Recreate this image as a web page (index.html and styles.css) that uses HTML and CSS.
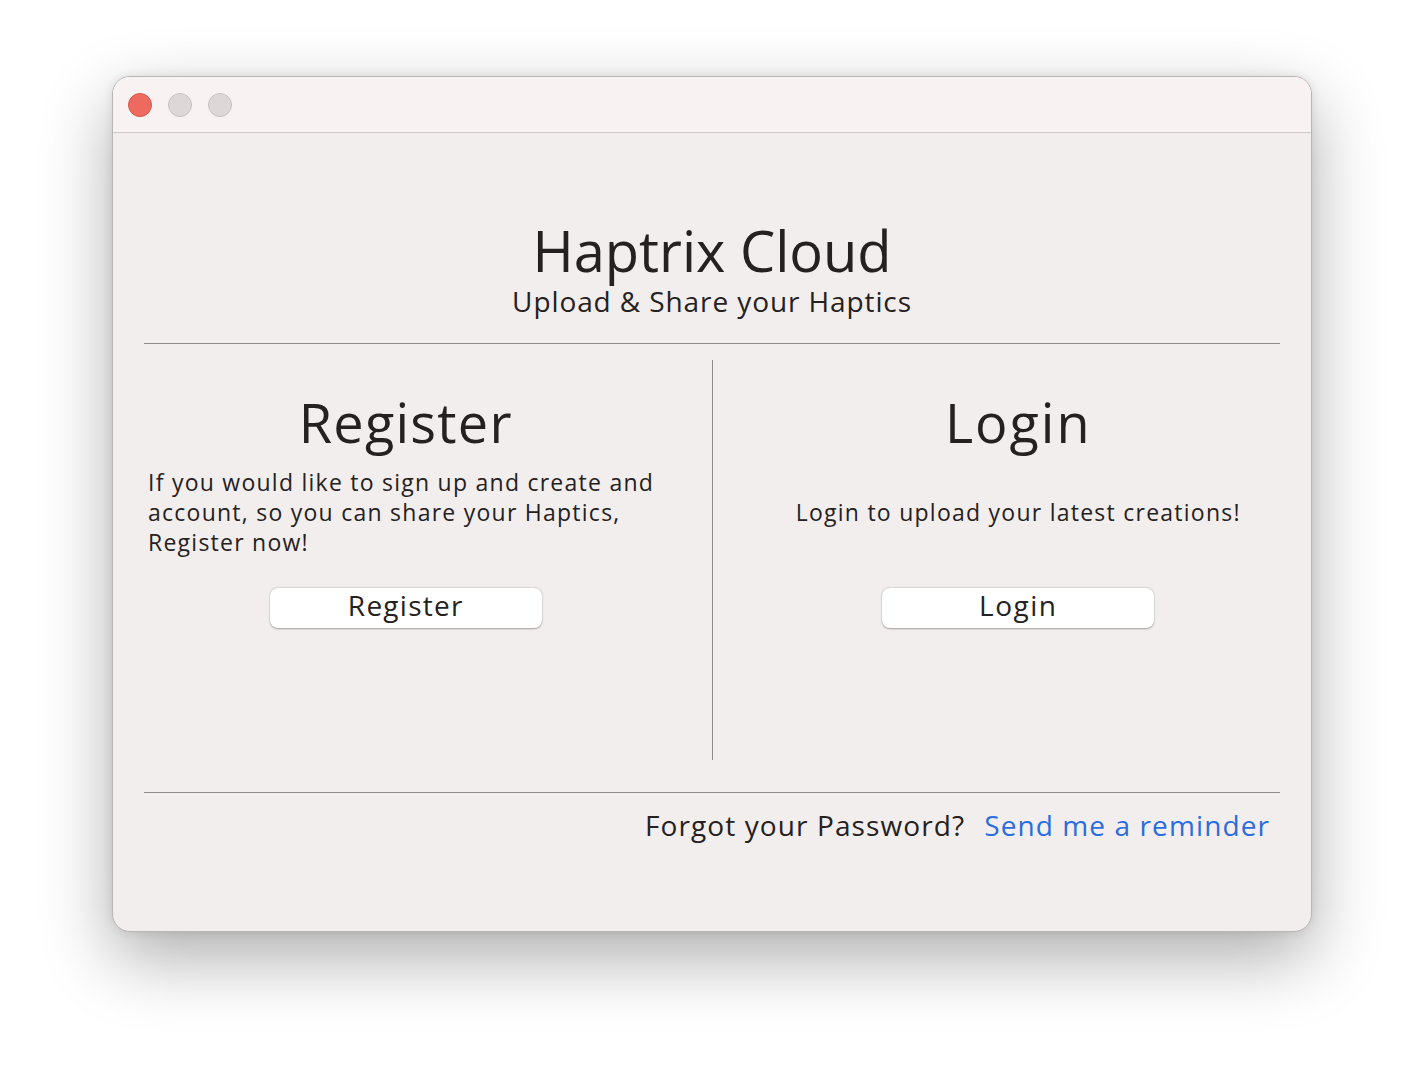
FILE: index.html
```html
<!DOCTYPE html>
<html>
<head>
<meta charset="utf-8">
<link rel="stylesheet" href="styles.css">
</head>
<body>
<div class="window">
  <div class="titlebar">
    <span class="light red"></span>
    <span class="light grey"></span>
    <span class="light grey"></span>
  </div>
  <div class="content">
    <h1 class="title">Haptrix Cloud</h1>
    <p class="subtitle">Upload &amp; Share your Haptics</p>
    <div class="rule"></div>
    <div class="columns">
      <section class="col col-left">
        <h2 class="heading">Register</h2>
        <div class="desc desc-left">If you would like to sign up and create and<br>account, so you can share your Haptics,<br>Register now!</div>
        <button class="btn">Register</button>
      </section>
      <div class="vline"></div>
      <section class="col col-right">
        <h2 class="heading heading-login">Login</h2>
        <div class="desc desc-center">Login to upload your latest creations!</div>
        <button class="btn btn-login">Login</button>
      </section>
    </div>
    <div class="rule rule-bottom"></div>
    <div class="footer">
      <span class="forgot">Forgot your Password?</span>
      <a class="link">Send me a reminder</a>
    </div>
  </div>
</div>
</body>
</html>
```

FILE: styles.css
```css
html, body {
  margin: 0;
  padding: 0;
  background: #ffffff;
}
body {
  min-height: 1080px;
  box-sizing: border-box;
  padding: 76px 0 0 112px;
  font-family: "Open Sans", "DejaVu Sans", sans-serif;
  color: #252121;
}
.window {
  width: 1200px;
  height: 856px;
  box-sizing: border-box;
  border-radius: 18px;
  background: #f3eeee;
  border: 1px solid #b9b5b5;
  box-shadow: 0 26px 70px rgba(0,0,0,0.32), 0 0 10px rgba(0,0,0,0.10);
  overflow: hidden;
  display: flex;
  flex-direction: column;
}
.titlebar {
  height: 55px;
  background: #f9f2f2;
  border-bottom: 1px solid #cfc9c9;
  display: flex;
  align-items: center;
  gap: 16px;
  padding-left: 15px;
  flex: none;
}
.light {
  width: 24px;
  height: 24px;
  border-radius: 50%;
  box-sizing: border-box;
}
.light.red { background: #ee6a5f; border: 1px solid #d5574c; }
.light.grey { background: #ddd7d7; border: 1px solid #c6c0c0; }
.content {
  padding: 88px 31px 0 31px;
  display: flex;
  flex-direction: column;
}
.title {
  margin: 0;
  font-size: 56px;
  line-height: 58px;
  font-weight: 400;
  text-align: center;
}
.subtitle {
  margin: 6px 0 0 0;
  font-size: 28px;
  line-height: 32px;
  letter-spacing: 0.9px;
  text-align: center;
}
.rule {
  margin-top: 26px;
  height: 1px;
  background: #8f8a8a;
}
.columns {
  margin-top: 16px;
  height: 400px;
  display: flex;
}
.col {
  flex: 1;
  display: flex;
  flex-direction: column;
  align-items: center;
  padding-top: 30px;
}
.col-left { padding-right: 44px; }
.col-right { padding-left: 44px; }
.vline {
  width: 1px;
  background: #8f8a8a;
}
.heading {
  margin: 0;
  font-size: 54px;
  line-height: 64px;
  font-weight: 400;
  letter-spacing: 1.25px;
}
.heading-login { letter-spacing: 2px; }
.desc {
  margin-top: 13px;
  height: 90px;
  font-size: 23px;
  line-height: 30px;
  letter-spacing: 1.25px;
  align-self: stretch;
  white-space: nowrap;
}
.desc-left { padding-left: 4px; }
.desc-center {
  display: flex;
  align-items: center;
  justify-content: center;
}
.btn {
  margin-top: 31px;
  width: 272px;
  height: 40px;
  border: none;
  border-radius: 8px;
  background: #ffffff;
  box-shadow: 0 0.5px 2px rgba(0,0,0,0.35);
  font-family: inherit;
  font-size: 28px;
  line-height: 34px;
  letter-spacing: 1.25px;
  color: #252121;
  padding: 0 0 6px 0;
}
.btn-login { letter-spacing: 1.5px; }
.rule-bottom { margin-top: 32px; }
.footer {
  margin-top: 14px;
  display: flex;
  justify-content: flex-end;
  padding-right: 10px;
  font-size: 28px;
  line-height: 36px;
  letter-spacing: 1.1px;
}
.link {
  margin-left: 19px;
  color: #2a6dde;
}
```
